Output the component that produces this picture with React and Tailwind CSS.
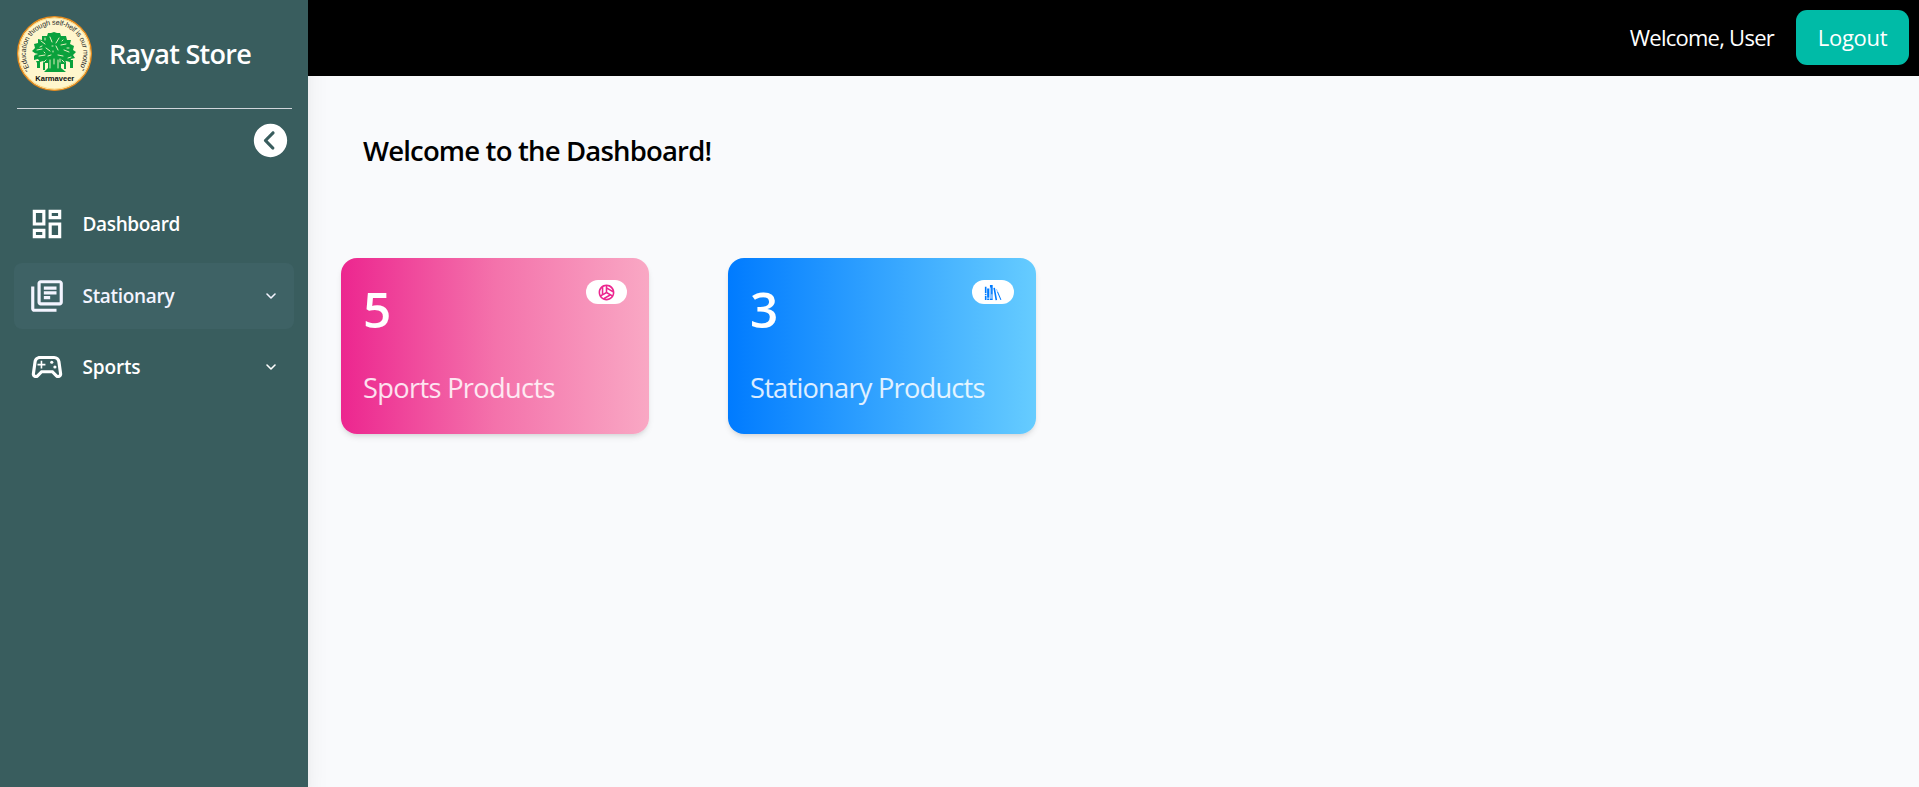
import React from "react";
import { MdOutlineDashboard, MdOutlineLibraryBooks, MdOutlineSportsEsports, MdOutlineSportsVolleyball } from "react-icons/md";
import { IoIosArrowDropleftCircle } from "react-icons/io";
import { FiChevronDown } from "react-icons/fi";
import { GiBookshelf } from "react-icons/gi";

function Logo() {
  return (
    <svg viewBox="0 0 75 75" className="h-[75px] w-[75px] shrink-0">
      <defs>
        <path id="motto" d="M13.6 53.6 A 28.8 28.8 0 1 1 61.4 53.6" />
      </defs>
      <circle cx="37.5" cy="37.5" r="36.8" fill="#fff6cd" stroke="#e58a1c" strokeWidth="1.4" />
      <circle cx="37.5" cy="37.5" r="35.5" fill="none" stroke="#fbdc8c" strokeWidth="1" />
      <g fill="#0aa13c">
        <path d="M37 16l3 1 3 0 1 3 5 0 1 4 4 0 -1 4 4 2-1 4 3 2-3 3 2 3-4 1-1 3-4-1-2 3-3 0v4l5 4h-22l4-4v-5l-3 0-2-2-3 1-2-3-4 1 0-4 2-2-4-3 3-3-1-4 4-1 0-4 4 1 0-4 5 0 1-3 3 0z" />
        <path d="M19 45h4v7h-3v-5zM52 44h4v8h-3v-5zM26 46h2v8h-2zM47 46h2v7h-2z" />
      </g>
      <g stroke="#fff6cd" strokeWidth="0.9" fill="none" strokeLinecap="round">
        <path d="M24 25l4 3M33 21l2 5M42 22l-3 5M49 28l-5 1M20 34l5-1M29 32l4 3M39 30l2 4M47 34l5 2M22 40l6-1M31 40l3-1M41 39l5 1M51 42l3-1M27 36l1 1M36 35v1M33 44v8M37 43v5M41 44v8M29 44l-2 2M45 44l2 2M28 22v2M46 24l-1 1M52 32h-2M18 38h2M35 30h1M25 30l-2 1M43 43v3" />
      </g>
      <text className="font-['Liberation_Sans']" fontSize="7.2" fill="#26261f">
        <textPath href="#motto" textLength="123" lengthAdjust="spacing">"Education through self-helf is our motto"</textPath>
      </text>
      <text x="37.8" y="65" textAnchor="middle" textLength="39" className="font-['Liberation_Sans'] font-bold" fontSize="7.6" fill="#111">Karmaveer</text>
    </svg>
  );
}

function MenuItem({ icon: Icon, label, spacing, active, expandable }) {
  return (
    <li className={`flex h-[66px] items-center rounded-lg pl-[14px] pr-[15px] ${active ? "bg-[#3e6265] text-[#f3f4ff]" : "text-white"}`}>
      <Icon size={38} />
      <span className={`ml-[16.5px] flex-1 text-[19px] font-semibold leading-6 ${spacing}`}>{label}</span>
      {expandable && <FiChevronDown size={16} strokeWidth={2.4} />}
    </li>
  );
}

function Card({ count, label, icon: Icon, iconSize, gradient, tint, spacing, pill }) {
  return (
    <div className={`flex h-44 w-[308px] flex-col rounded-2xl px-[22px] shadow-md ${gradient}`}>
      <div className="flex justify-between">
        <span className="mt-[21px] text-[49.5px] font-semibold leading-[60px] tracking-[-1px] text-white">{count}</span>
        <span className={`mt-[22px] flex h-6 items-center justify-center rounded-full bg-white ${pill} ${tint}`}>
          <Icon size={iconSize} />
        </span>
      </div>
      <span className={`mt-[31px] text-[27.2px] leading-9 text-white/85 ${spacing}`}>{label}</span>
    </div>
  );
}

export default function App() {
  return (
    <div className="flex h-[787px] w-full overflow-hidden bg-[#f9fafc] font-['Open_Sans','Noto_Sans',sans-serif]">
      <aside className="z-10 w-[308px] shrink-0 bg-[#395d5e] text-white shadow-xl">
        <div className="ml-[17px] mr-4 flex h-[109px] border-b border-[#d1d5db] pt-4">
          <Logo />
          <h1 className="ml-[17px] mt-[20px] text-[27px] font-semibold leading-9 tracking-[-0.72px]">Rayat Store</h1>
        </div>
        <div className="flex justify-end pr-[17px] pt-[11px]">
          <IoIosArrowDropleftCircle size={41} />
        </div>
        <ul className="mx-[14px] mt-[30px] flex flex-col gap-[5.5px]">
          <MenuItem icon={MdOutlineDashboard} label="Dashboard" spacing="tracking-[-0.35px]" />
          <MenuItem icon={MdOutlineLibraryBooks} label="Stationary" spacing="tracking-[-0.3px]" active expandable />
          <MenuItem icon={MdOutlineSportsEsports} label="Sports" spacing="tracking-[-0.15px]" expandable />
        </ul>
      </aside>
      <div className="flex-1">
        <header className="flex h-[76px] items-start justify-end bg-black pr-[10px] pt-[10px] text-white">
          <span className="mr-[22px] mt-[11px] text-[22px] leading-8 tracking-[-0.75px]">Welcome, User</span>
          <button className="h-[55px] w-[113px] rounded-[11px] bg-[#00bba7] text-[22px] tracking-[-0.3px]">Logout</button>
        </header>
        <main className="pl-[33px]">
          <h2 className="ml-[22px] mt-[55px] text-[27.5px] font-semibold leading-10 tracking-[-0.82px] text-black">Welcome to the Dashboard!</h2>
          <div className="mt-[87px] flex gap-[79px]">
            <Card count="5" label="Sports Products" icon={MdOutlineSportsVolleyball} iconSize={19} gradient="bg-[linear-gradient(to_right,#ec268f,#f472ab_50%,#f9a8c4)]" tint="text-[#ec268f]" spacing="tracking-[-0.65px]" pill="w-[41px]" />
            <Card count="3" label="Stationary Products" icon={GiBookshelf} iconSize={18} gradient="bg-[linear-gradient(to_right,#007bff,#66ccff)]" tint="text-[#007bff]" spacing="tracking-[-0.75px]" pill="w-[42px]" />
          </div>
        </main>
      </div>
    </div>
  );
}
